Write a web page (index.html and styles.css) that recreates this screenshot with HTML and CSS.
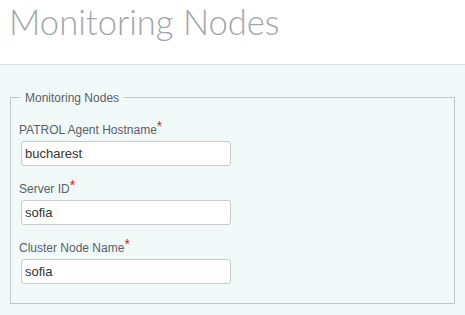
FILE: index.html
```html
<!DOCTYPE html>
<html lang="en">
<head>
    <meta charset="UTF-8">
    <title>Monitoring Nodes</title>
    <link rel="stylesheet" href="styles.css">
</head>
<body>
    <div class="page-header">
        <h1>Monitoring Nodes</h1>
    </div>

    <div class="page-body">
        <fieldset class="group">
            <legend>Monitoring Nodes</legend>

            <div class="field">
                <label for="hostname">PATROL Agent Hostname<span class="req">*</span></label>
                <input type="text" id="hostname" value="bucharest">
            </div>

            <div class="field">
                <label for="server-id">Server ID<span class="req">*</span></label>
                <input type="text" id="server-id" value="sofia">
            </div>

            <div class="field">
                <label for="node-name">Cluster Node Name<span class="req">*</span></label>
                <input type="text" id="node-name" value="sofia">
            </div>
        </fieldset>
    </div>
</body>
</html>
```

FILE: styles.css
```css
* {
    margin: 0;
    padding: 0;
    box-sizing: border-box;
}

body {
    font-family: 'Liberation Sans', Arial, sans-serif;
    background-color: #f2f9f9;
    height: 315px;
    overflow: hidden;
}

.page-header {
    background-color: #ffffff;
    height: 65px;
    border-bottom: 1px solid #dfe3e5;
}

.page-header h1 {
    font-family: 'Lato', sans-serif;
    font-weight: 300;
    font-size: 34.6px;
    line-height: 44px;
    color: #a2a6ac;
    padding: 0 0 0 9px;
}

.page-body {
    padding: 24px 10px 0 10px;
}

.group {
    border: 1px solid #c4c6c7;
    padding: 16px 8px 12px 8px;
    height: 215px;
}

.group legend {
    font-size: 12px;
    color: #5a6068;
    padding: 2px 5px 0 5px;
    margin-left: 1px;
}

.field {
    margin-bottom: 14px;
}

.field label {
    display: block;
    font-size: 12px;
    color: #5a6068;
    line-height: 16px;
    margin-bottom: 3px;
}

.req {
    color: #ee1111;
    font-size: 14px;
    position: relative;
    top: -3px;
}

.field input {
    display: block;
    width: 210px;
    height: 25px;
    margin-left: 2px;
    border: 1px solid #c9cbcd;
    border-radius: 3px;
    background-color: #ffffff;
    font-family: 'Liberation Sans', Arial, sans-serif;
    font-size: 13px;
    color: #333;
    padding: 0 3px;
}
```
